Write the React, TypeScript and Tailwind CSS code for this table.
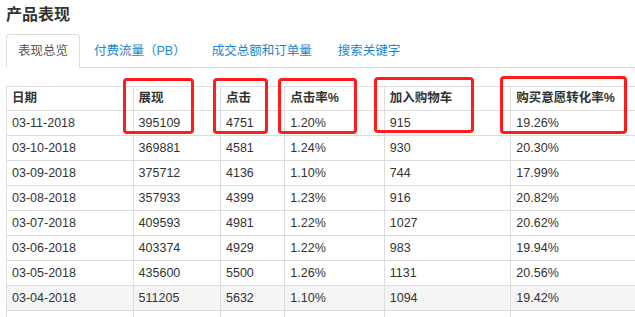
const TABS = ["表现总览", "付费流量（PB）", "成交总额和订单量", "搜索关键字"];

const COLS = [
  { label: "日期", w: "w-[126px]" },
  { label: "展现", w: "w-[87px]" },
  { label: "点击", w: "w-[64px]" },
  { label: "点击率%", w: "w-[99px]" },
  { label: "加入购物车", w: "w-[126px]" },
  { label: "购买意愿转化率%", w: "w-[128px]" },
];

const ROWS = [
  ["03-11-2018", "395109", "4751", "1.20%", "915", "19.26%"],
  ["03-10-2018", "369881", "4581", "1.24%", "930", "20.30%"],
  ["03-09-2018", "375712", "4136", "1.10%", "744", "17.99%"],
  ["03-08-2018", "357933", "4399", "1.23%", "916", "20.82%"],
  ["03-07-2018", "409593", "4981", "1.22%", "1027", "20.62%"],
  ["03-06-2018", "403374", "4929", "1.22%", "983", "19.94%"],
  ["03-05-2018", "435600", "5500", "1.26%", "1131", "20.56%"],
  ["03-04-2018", "511205", "5632", "1.10%", "1094", "19.42%"],
  ["", "", "", "", "", ""],
];

// red annotation boxes drawn over the table
const MARKS = [
  "left-[123px] top-[78px] w-[71px] h-[56px]",
  "left-[213px] top-[78px] w-[55px] h-[56px]",
  "left-[278px] top-[78px] w-[79px] h-[56px]",
  "left-[374px] top-[77px] w-[100px] h-[56px]",
  "left-[500px] top-[76px] w-[127px] h-[58px]",
];

export default function App() {
  return (
    <div
      className="relative w-[635px] h-[317px] overflow-hidden bg-white pl-[6px] pt-[4px] text-[#333]"
      style={{ fontFamily: '"Liberation Sans", "Noto Sans CJK SC", sans-serif' }}
    >
      <h3 className="text-[16px] leading-[22px] font-bold">产品表现</h3>

      {/* Tabs */}
      <ul className="mt-[8px] flex border-b border-[#ddd] w-[630px]">
        {TABS.map((t, i) => (
          <li
            key={t}
            className={
              i === 0
                ? "h-[34px] -mb-px mr-[2px] px-[11px] flex items-center text-[12.5px] text-[#555] bg-white border border-[#ddd] border-b-white rounded-t-[4px]"
                : "h-[34px] -mb-px mr-[2px] px-[11px] flex items-center text-[12.5px] text-[#1c86cf] border border-transparent"
            }
          >
            {t}
          </li>
        ))}
      </ul>

      {/* Data table */}
      <table className="mt-[18px] w-[634px] table-fixed border-collapse text-[12.5px]">
        <thead>
          <tr>
            {COLS.map((c) => (
              <th key={c.label} className={`${c.w} h-[24px] border border-[#ddd] px-[5px] py-0 text-left font-bold`}>
                {c.label}
              </th>
            ))}
          </tr>
        </thead>
        <tbody>
          {ROWS.map((r, i) => (
            <tr key={i} className={i === 7 ? "bg-[#f5f5f5]" : ""}>
              {r.map((v, j) => (
                <td key={j} className="h-[25px] border border-[#ddd] px-[5px] py-0">
                  {v}
                </td>
              ))}
            </tr>
          ))}
        </tbody>
      </table>

      {MARKS.map((m) => (
        <div key={m} className={`absolute ${m} border-[3px] border-[#ff1c1c] rounded-[4px]`} />
      ))}
    </div>
  );
}
